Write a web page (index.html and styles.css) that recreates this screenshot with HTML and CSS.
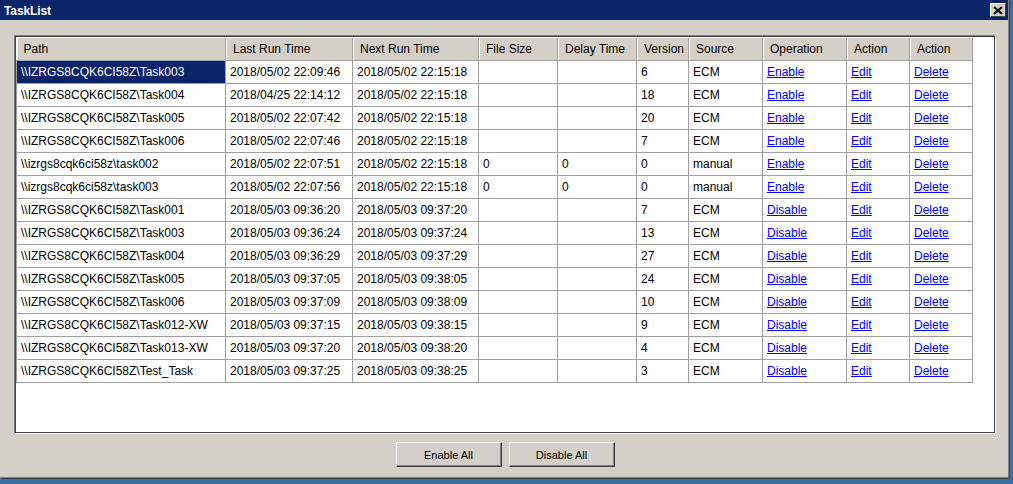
FILE: index.html
```html
<!DOCTYPE html>
<html>
<head>
<link rel="stylesheet" href="styles.css">
</head>
<body>
<div id="window">
	<div class="titlebar">
		<span class="title">TaskList</span>
		<span class="closeBtn">
			<svg width="10" height="9" viewBox="0 0 10 9"><path d="M1 1 L9 8 M9 1 L1 8" stroke="#000" stroke-width="2" fill="none"/></svg>
		</span>
	</div>
	<div class="content">
		<div class="panel">
			<table class="grid" cellpadding="0" cellspacing="0">
				<colgroup>
					<col style="width:209px"><col style="width:127px"><col style="width:126px"><col style="width:79px"><col style="width:79px">
					<col style="width:52px"><col style="width:74px"><col style="width:84px"><col style="width:63px"><col style="width:63px">
				</colgroup>
				<tr class="head">
					<th>Path</th><th>Last Run Time</th><th>Next Run Time</th><th>File Size</th><th>Delay Time</th>
					<th>Version</th><th>Source</th><th>Operation</th><th>Action</th><th>Action</th>
				</tr>
				<tr>
					<td class="selected">\\IZRGS8CQK6CI58Z\Task003</td><td>2018/05/02 22:09:46</td><td>2018/05/02 22:15:18</td><td></td><td></td>
					<td>6</td><td>ECM</td><td><a href="#">Enable</a></td><td><a href="#">Edit</a></td><td><a href="#">Delete</a></td>
				</tr>
				<tr>
					<td>\\IZRGS8CQK6CI58Z\Task004</td><td>2018/04/25 22:14:12</td><td>2018/05/02 22:15:18</td><td></td><td></td>
					<td>18</td><td>ECM</td><td><a href="#">Enable</a></td><td><a href="#">Edit</a></td><td><a href="#">Delete</a></td>
				</tr>
				<tr>
					<td>\\IZRGS8CQK6CI58Z\Task005</td><td>2018/05/02 22:07:42</td><td>2018/05/02 22:15:18</td><td></td><td></td>
					<td>20</td><td>ECM</td><td><a href="#">Enable</a></td><td><a href="#">Edit</a></td><td><a href="#">Delete</a></td>
				</tr>
				<tr>
					<td>\\IZRGS8CQK6CI58Z\Task006</td><td>2018/05/02 22:07:46</td><td>2018/05/02 22:15:18</td><td></td><td></td>
					<td>7</td><td>ECM</td><td><a href="#">Enable</a></td><td><a href="#">Edit</a></td><td><a href="#">Delete</a></td>
				</tr>
				<tr>
					<td>\\izrgs8cqk6ci58z\task002</td><td>2018/05/02 22:07:51</td><td>2018/05/02 22:15:18</td><td>0</td><td>0</td>
					<td>0</td><td>manual</td><td><a href="#">Enable</a></td><td><a href="#">Edit</a></td><td><a href="#">Delete</a></td>
				</tr>
				<tr>
					<td>\\izrgs8cqk6ci58z\task003</td><td>2018/05/02 22:07:56</td><td>2018/05/02 22:15:18</td><td>0</td><td>0</td>
					<td>0</td><td>manual</td><td><a href="#">Enable</a></td><td><a href="#">Edit</a></td><td><a href="#">Delete</a></td>
				</tr>
				<tr>
					<td>\\IZRGS8CQK6CI58Z\Task001</td><td>2018/05/03 09:36:20</td><td>2018/05/03 09:37:20</td><td></td><td></td>
					<td>7</td><td>ECM</td><td><a href="#">Disable</a></td><td><a href="#">Edit</a></td><td><a href="#">Delete</a></td>
				</tr>
				<tr>
					<td>\\IZRGS8CQK6CI58Z\Task003</td><td>2018/05/03 09:36:24</td><td>2018/05/03 09:37:24</td><td></td><td></td>
					<td>13</td><td>ECM</td><td><a href="#">Disable</a></td><td><a href="#">Edit</a></td><td><a href="#">Delete</a></td>
				</tr>
				<tr>
					<td>\\IZRGS8CQK6CI58Z\Task004</td><td>2018/05/03 09:36:29</td><td>2018/05/03 09:37:29</td><td></td><td></td>
					<td>27</td><td>ECM</td><td><a href="#">Disable</a></td><td><a href="#">Edit</a></td><td><a href="#">Delete</a></td>
				</tr>
				<tr>
					<td>\\IZRGS8CQK6CI58Z\Task005</td><td>2018/05/03 09:37:05</td><td>2018/05/03 09:38:05</td><td></td><td></td>
					<td>24</td><td>ECM</td><td><a href="#">Disable</a></td><td><a href="#">Edit</a></td><td><a href="#">Delete</a></td>
				</tr>
				<tr>
					<td>\\IZRGS8CQK6CI58Z\Task006</td><td>2018/05/03 09:37:09</td><td>2018/05/03 09:38:09</td><td></td><td></td>
					<td>10</td><td>ECM</td><td><a href="#">Disable</a></td><td><a href="#">Edit</a></td><td><a href="#">Delete</a></td>
				</tr>
				<tr>
					<td>\\IZRGS8CQK6CI58Z\Task012-XW</td><td>2018/05/03 09:37:15</td><td>2018/05/03 09:38:15</td><td></td><td></td>
					<td>9</td><td>ECM</td><td><a href="#">Disable</a></td><td><a href="#">Edit</a></td><td><a href="#">Delete</a></td>
				</tr>
				<tr>
					<td>\\IZRGS8CQK6CI58Z\Task013-XW</td><td>2018/05/03 09:37:20</td><td>2018/05/03 09:38:20</td><td></td><td></td>
					<td>4</td><td>ECM</td><td><a href="#">Disable</a></td><td><a href="#">Edit</a></td><td><a href="#">Delete</a></td>
				</tr>
				<tr>
					<td>\\IZRGS8CQK6CI58Z\Test_Task</td><td>2018/05/03 09:37:25</td><td>2018/05/03 09:38:25</td><td></td><td></td>
					<td>3</td><td>ECM</td><td><a href="#">Disable</a></td><td><a href="#">Edit</a></td><td><a href="#">Delete</a></td>
				</tr>
			</table>
		</div>
		<div class="buttons">
			<button class="winBtn">Enable All</button>
			<button class="winBtn">Disable All</button>
		</div>
	</div>
</div>
</body>
</html>
```

FILE: styles.css
```css
html, body {
	margin:0;
	padding:0;
}
body {
	background:#3a6ea5;
	width:1013px;
	height:484px;
	overflow:hidden;
	font-family:"Liberation Sans", Arial, sans-serif;
	font-size:11px;
	color:#000;
}
#window {
	width:1008px;
	height:477px;
	background:#d4d0c8;
	border-right:1px solid #808080;
	border-bottom:1px solid #808080;
	box-shadow:1px 1px 0 #404040;
	display:flex;
	flex-direction:column;
}
.titlebar {
	height:20px;
	background:#0a246a;
	display:flex;
	align-items:center;
	justify-content:space-between;
	padding:0 2px 0 4px;
}
.title {
	color:#fff;
	font-weight:bold;
	font-size:12px;
	letter-spacing:-0.1px;
	padding-top:1px;
}
.closeBtn {
	width:16px;
	height:14px;
	box-sizing:border-box;
	background:#d4d0c8;
	border:1px solid;
	border-color:#fff #404040 #404040 #fff;
	display:flex;
	align-items:center;
	justify-content:center;
}
.content {
	flex:1;
	padding:15px 12px 0 14px;
	display:flex;
	flex-direction:column;
}
.panel {
	height:399px;
	box-sizing:border-box;
	background:#fff;
	border:1px solid;
	border-color:#808080 #fff #fff #808080;
	box-shadow:inset 1px 1px 0 #404040, inset -1px -1px 0 #404040;
	padding:2px 0 0 1px;
}
table.grid {
	border-collapse:collapse;
	table-layout:fixed;
	width:956px;
	font-size:12px;
}
.grid th {
	height:22px;
	background:#d4d0c8;
	font-weight:normal;
	text-align:left;
	padding:0 0 0 7px;
	border-right:1px solid #a0a0a0;
	border-bottom:1px solid #a0a0a0;
	box-shadow:inset 1px 0 0 #fff;
	white-space:nowrap;
	overflow:hidden;
}
.grid td {
	height:22px;
	padding:0 0 0 4px;
	border:1px solid #a0a0a0;
	white-space:nowrap;
	overflow:hidden;
}
.grid td.selected {
	background:#0a246a;
	color:#fff;
}
.grid a {
	color:#0000ff;
	text-decoration:underline;
}
.buttons {
	display:flex;
	justify-content:center;
	gap:7px;
	margin-top:8px;
}
.winBtn {
	width:106px;
	height:25px;
	background:#d4d0c8;
	font-family:"Liberation Sans", Arial, sans-serif;
	font-size:11px;
	color:#000;
	border:1px solid;
	border-color:#fff #404040 #404040 #fff;
	box-shadow:inset -1px -1px 0 #808080;
	padding:0;
}
```
